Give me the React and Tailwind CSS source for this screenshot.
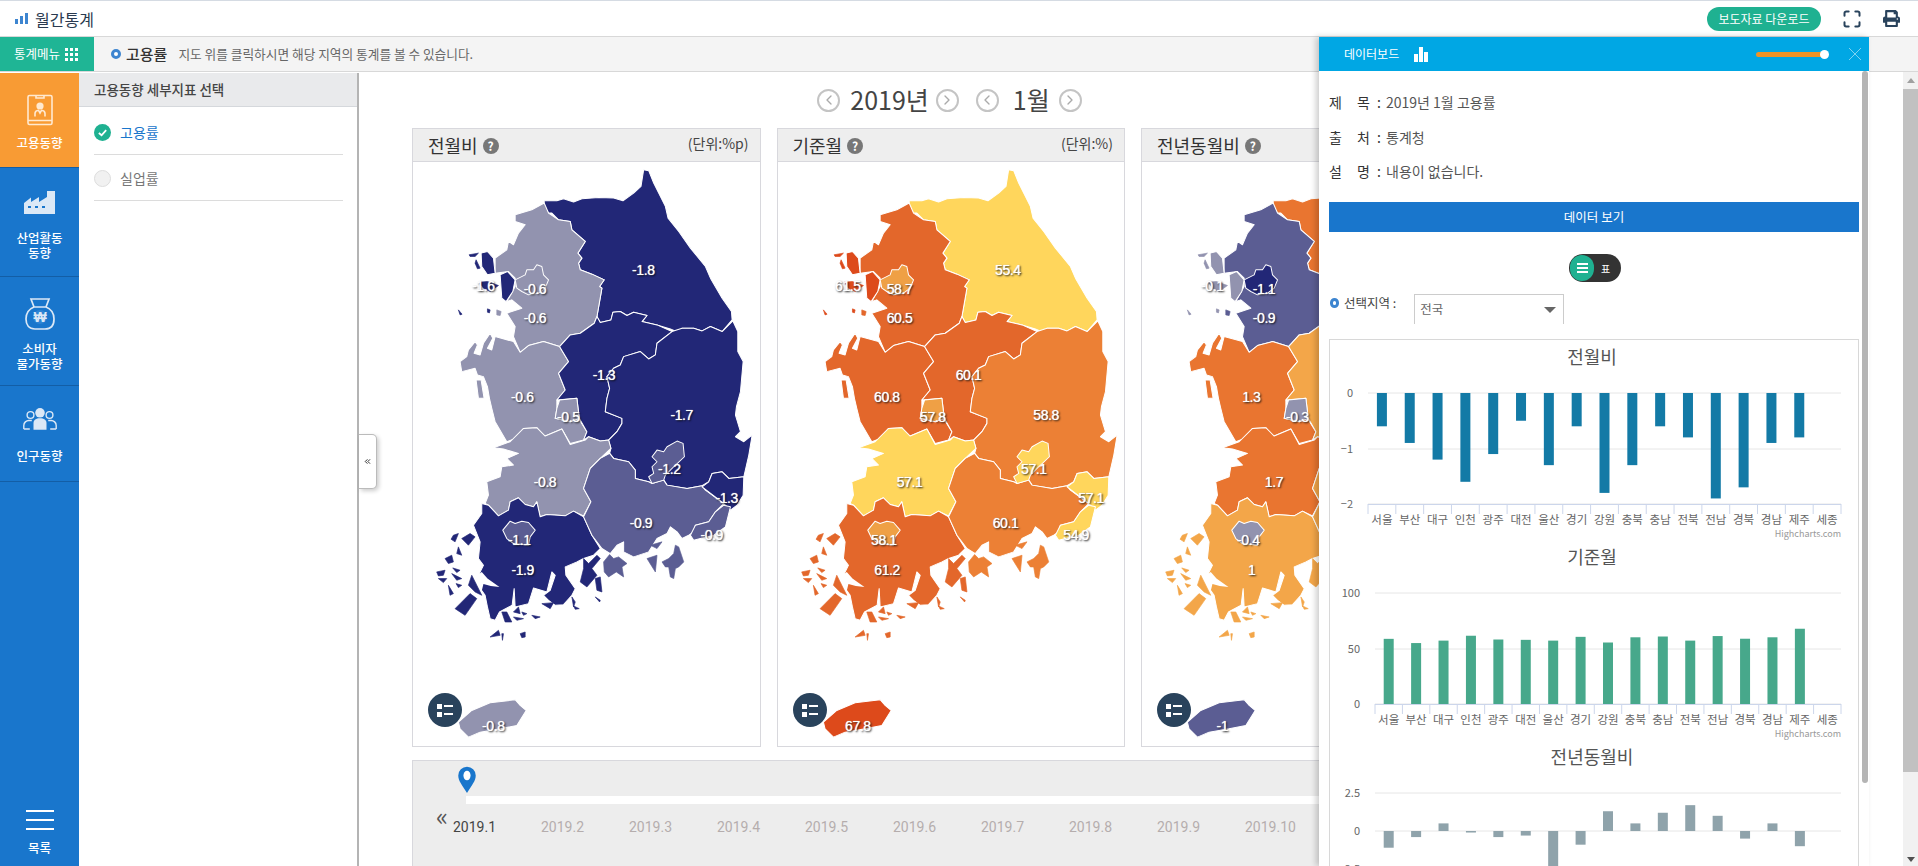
import { ChevronLeft, ChevronRight, ChevronsLeft, Maximize } from "lucide-react";
import { FaPrint } from "react-icons/fa";

const low = (s) =>
  s
    .trim()
    .split(/\s+/)
    .map((q) => {
      const [x, y] = q.split(",");
      return `${x},${+y + 960}`;
    })
    .join(" ");

// map shapes, traced on the first card at 3x
const REGIONS = {
  gangwon: {
    label: [730, 575],
    polys: [
      "432,368 470,368 490,362 520,372 545,362 595,358 640,360 668,368 700,345 722,325 730,275 745,278 760,315 795,385 803,420 835,460 870,510 915,565 930,600 965,660 993,700 995,725 965,760 930,745 905,758 880,750 845,750 840,765 810,752 770,740 725,730 740,712 700,702 680,712 660,700 638,702 632,725 600,733 590,715 605,630 598,625 612,605 575,588 540,575 535,555 545,540 533,525 555,490 515,455 510,430 475,425 455,405 445,405 432,385",
    ],
  },
  gyeonggi: {
    label: [405, 720],
    polys: [
      "432,375 445,405 475,425 510,430 515,455 555,490 533,525 545,540 535,555 540,575 575,588 612,605 598,625 605,630 590,715 582,735 540,765 510,770 478,805 430,790 385,802 360,822 340,775 345,745 320,705 365,690 335,665 320,670 345,625 345,600 325,580 285,585 285,540 320,515 325,490 340,500 355,465 375,440 345,430 345,410 395,395",
    ],
    islands: ["290,695 303,700 300,712 290,710"],
  },
  incheon: {
    label: [250, 622],
    polys: [
      "300,590 322,580 345,605 338,640 318,670 305,660",
      "243,525 262,520 280,540 285,585 262,590 245,565",
    ],
    islands: [
      "207,530 235,525 225,535 210,535",
      "228,545 240,570 232,572 225,555",
      "238,612 262,610 295,622 270,640 250,630",
      "175,695 186,708 180,710",
      "262,692 270,695 268,704 262,702",
    ],
  },
  chungnam: {
    label: [367, 955],
    polys: [
      `180,850 200,835 205,815 225,790 232,800 222,825 240,830 250,795 270,765 278,780 262,810 275,815 285,775 340,790 360,822 385,802 430,790 478,805 505,850 475,885 495,935 470,965 ${low(
        "470,30 465,60 510,70 535,60 560,100 550,125 510,135 485,92 430,115 410,88 370,90 360,115 320,130 285,70 275,30",
      )} 268,960 262,925 250,895 232,890 225,870 185,880`,
      "228,905 243,905 252,960 235,960",
    ],
  },
  chungbuk: {
    label: [612, 890],
    polys: [
      `478,805 510,770 540,765 582,735 590,715 600,733 632,725 638,702 660,700 680,712 700,702 740,712 725,730 770,740 815,760 770,795 765,830 745,842 720,820 670,835 660,860 640,870 620,895 628,930 620,960 ${low(
        "615,40 665,60 665,75 650,100 625,125 600,128 565,115 550,125 560,100 537,60 530,0",
      )} 470,965 495,935 475,885 505,850`,
    ],
  },
  gyeongbuk: {
    label: [845, 1010],
    polys: [
      `815,760 845,750 880,750 905,758 930,745 965,760 997,728 1012,760 1012,820 1028,850 1020,940 1008,985 ${low(
        "1005,50 1020,100 1005,115 1030,130 1055,110 1045,170 1030,235 985,240 965,220 935,225 925,250 905,262 860,270 800,260 790,245 755,255 745,250 705,240 705,215 685,190 640,180 628,165 632,150 625,125 650,100 665,75 665,60 615,40",
      )} 620,960 628,930 620,895 640,870 660,860 670,835 720,820 745,842 765,830 770,795`,
    ],
  },
  jeonbuk: {
    label: [435, 1212],
    polys: [
      low(
        "280,148 330,130 370,90 410,88 435,113 485,92 510,138 555,125 565,115 600,128 625,125 632,150 600,180 570,210 550,270 572,310 550,352 520,338 495,352 440,348 420,355 410,310 400,325 375,318 355,298 330,310 325,335 295,352 265,320 255,315 265,290 260,250 300,235 305,205 340,200 320,180 355,165 310,152",
      ),
    ],
  },
  jeonnam: {
    label: [368, 1475],
    polys: [
      low(
        "245,315 265,320 295,352 325,335 330,310 355,298 375,318 400,325 410,310 420,355 440,348 495,352 520,338 550,355 575,410 600,450 580,470 550,480 530,490 495,505 497,530 525,570 515,590 490,618 465,620 445,605 430,590 450,575 465,530 455,520 440,580 400,568 385,615 345,625 342,570 336,620 298,640 285,665 270,660 262,625 255,590 230,555 240,520 250,500 235,480 240,430 220,380 245,345",
      ),
    ],
    cuts: [low("232,530 245,520 262,540 298,565 272,562 250,556 243,585 230,560")],
    islands: [
      "160,410 175,405 165,430 153,422",
      "185,420 210,405 225,415 205,440",
      "175,445 185,470 170,465",
      "135,480 155,470 160,490 145,495",
      "158,508 180,515 170,522",
      "110,520 135,515 130,530 115,532",
      "115,540 140,540 130,552",
      "155,525 185,540 170,545",
      "168,555 185,560 175,567",
      "145,560 160,585 150,590",
      "205,560 215,530 245,590 225,580",
      "165,630 210,585 230,600 195,650",
      "305,640 320,640 335,670 315,670",
      "340,640 355,625 360,645",
      "340,655 370,660 350,665",
      "365,640 380,645 370,650",
      "395,650 420,655 405,660",
      "425,615 460,612 450,630",
      "515,595 525,610 520,625",
      "520,622 537,630 525,632",
      "585,595 600,605 598,610",
      "585,540 600,535 605,580 590,575",
      "550,480 565,495 590,470 600,480 575,510 590,530 560,565 540,550 550,510",
      "270,715 295,695 300,710",
      "305,705 310,705 307,725",
      "360,705 375,700 375,715 365,717",
    ].map(low),
  },
  gyeongnam: {
    label: [723, 1334],
    polys: [
      low(
        "628,165 640,180 685,190 705,215 705,240 745,250 755,255 790,245 800,260 860,270 905,262 915,275 970,315 945,340 925,370 885,380 880,400 865,410 845,420 830,400 810,385 800,405 770,420 745,460 700,475 670,460 670,430 650,440 630,465 605,450 575,410 550,355 572,310 550,270 570,210 600,180",
      ),
    ],
    islands: [
      "610,490 628,468 640,480 655,475 680,495 665,505 670,535 648,520 625,535 612,520",
      "750,440 785,430 770,450",
      "740,480 770,470 765,520",
      "785,490 805,480 820,465 825,440 835,445 840,460 850,490 835,505 825,510 820,540 810,535 805,505 795,505",
    ].map(low),
  },
  ulsan: {
    label: [980, 1258],
    polys: [
      low(
        "905,265 925,250 935,225 965,220 985,240 1030,235 1028,290 1010,320 990,335 970,315",
      ),
    ],
  },
  busan: {
    label: [935, 1370],
    polys: [
      low(
        "870,410 885,380 925,370 945,340 970,320 990,325 975,385 940,410 900,420 880,425",
      ),
    ],
  },
  seoul: {
    label: [405, 632],
    polys: [
      "345,605 375,590 380,575 400,575 410,560 425,565 430,590 445,605 435,630 415,645 385,650 365,640 350,630",
    ],
  },
  daejeon: {
    label: [505, 1015],
    polys: [low("470,30 478,5 530,0 537,60 510,70 465,60")],
  },
  daegu: {
    label: [808, 1172],
    polys: [
      low(
        "800,145 830,128 848,135 852,175 820,205 795,230 790,245 755,255 745,235 760,225 755,205 770,190 755,175 770,155 790,160",
      ),
    ],
  },
  gwangju: {
    label: [358, 1385],
    polys: [
      low(
        "308,395 330,368 345,375 365,368 385,372 405,395 390,415 385,440 340,435 320,420",
      ),
    ],
  },
  jeju: {
    label: [280, 1943],
    polys: [
      low(
        "175,970 215,935 270,912 345,903 360,920 378,935 350,980 300,990 240,1000 205,1015 180,990",
      ),
    ],
  },
};

const D = "#222777";
const M = "#5b5d93";
const L = "#9293af";
const R1 = "#e3672b";
const R2 = "#ec8035";
const Y = "#ffd65c";
const A = "#efa045";
const X = "#dd4a1b";
const O1 = "#e97530";
const O2 = "#f3a649";

const CARDS = [
  {
    title: "전월비",
    unit: "(단위:%p)",
    data: {
      gangwon: ["-1.8", D],
      gyeonggi: ["-0.6", L],
      seoul: ["-0.6", L],
      incheon: ["-1.6", D],
      chungnam: ["-0.6", L],
      daejeon: ["-0.5", L],
      chungbuk: ["-1.3", D],
      gyeongbuk: ["-1.7", D],
      daegu: ["-1.2", M],
      jeonbuk: ["-0.8", L],
      ulsan: ["-1.3", D],
      gyeongnam: ["-0.9", M],
      busan: ["-0.9", M],
      gwangju: ["-1.1", M],
      jeonnam: ["-1.9", D],
      jeju: ["-0.8", L],
    },
  },
  {
    title: "기준월",
    unit: "(단위:%)",
    data: {
      gangwon: ["55.4", Y],
      gyeonggi: ["60.5", R1],
      seoul: ["58.7", A],
      incheon: ["61.5", X],
      chungnam: ["60.8", R1],
      daejeon: ["57.8", A],
      chungbuk: ["60.1", R1],
      gyeongbuk: ["58.8", R2],
      daegu: ["57.1", Y],
      jeonbuk: ["57.1", Y],
      ulsan: ["57.1", Y],
      gyeongnam: ["60.1", R2],
      busan: ["54.9", Y],
      gwangju: ["58.1", A],
      jeonnam: ["61.2", R1],
      jeju: ["67.8", X],
    },
  },
  {
    title: "전년동월비",
    unit: "",
    data: {
      gangwon: ["", O1],
      gyeonggi: ["-0.9", M],
      seoul: ["-1.1", D],
      incheon: ["-0.1", L],
      chungnam: ["1.3", O1],
      daejeon: ["-0.3", L],
      chungbuk: ["", O2],
      gyeongbuk: ["", O2],
      daegu: ["", O2],
      jeonbuk: ["1.7", O1],
      ulsan: ["", O2],
      gyeongnam: ["", O2],
      busan: ["", O2],
      gwangju: ["-0.4", L],
      jeonnam: ["1", O2],
      jeju: ["-1", M],
    },
  },
];

const CITIES = ["서울", "부산", "대구", "인천", "광주", "대전", "울산", "경기", "강원", "충북", "충남", "전북", "전남", "경북", "경남", "제주", "세종"];

function KoreaMap({ data }) {
  return (
    <svg viewBox="39 252 1038 1749" className="block w-full h-full">
      {Object.entries(REGIONS).map(([key, r]) => (
        <g key={key} fill={data[key][1]}>
          {r.polys.map((p, i) => (
            <polygon key={i} points={p} stroke="#ffffff" strokeWidth="3" strokeLinejoin="round" />
          ))}
          {(r.cuts || []).map((p, i) => (
            <polygon key={i} points={p} fill="#ffffff" />
          ))}
          {(r.islands || []).map((p, i) => (
            <polygon key={i} points={p} stroke={data[key][1]} strokeWidth="2" strokeLinejoin="round" />
          ))}
        </g>
      ))}
    </svg>
  );
}

function MapCard({ card }) {
  return (
    <div className="flex flex-col w-[348.5px] h-[619px] shrink-0 border border-[#d8d8dd]">
      <div className="flex items-center justify-between h-[35px] pl-[15px] pr-[11px] bg-[#eeeeee] border-b border-[#d8d8dd]">
        <div className="flex items-center gap-[5px]">
          <span className="text-[18px] text-[#333]">{card.title}</span>
          <span className="flex items-center justify-center w-4 h-4 mt-[2px] rounded-full bg-[#777] text-white text-[12px] font-bold leading-none">?</span>
        </div>
        <span className="text-[14px] text-[#444] -mt-[3px]">{card.unit}</span>
      </div>
      <div className="relative flex-1">
        <KoreaMap data={card.data} />
        {Object.entries(REGIONS).map(([key, r]) => (
          <span
            key={key}
            className="absolute -translate-x-1/2 -translate-y-1/2 font-['Liberation_Sans',sans-serif] text-[14px] tracking-[-0.4px] text-white [text-shadow:0_0_1px_#fff,1px_1px_2px_#000]"
            style={{ left: (r.label[0] - 39) / 3, top: (r.label[1] - 252) / 3 }}
          >
            {card.data[key][0]}
          </span>
        ))}
        <div className="absolute left-[15px] bottom-[19px] flex flex-col items-center justify-center gap-[3px] w-[34px] h-[34px] rounded-full bg-[#29435c]">
          <span className="flex items-center gap-[2px]">
            <span className="w-[5px] h-[5px] bg-white" />
            <span className="w-[9px] h-[2px] bg-white" />
          </span>
          <span className="flex items-center gap-[2px]">
            <span className="w-[5px] h-[5px] bg-white" />
            <span className="w-[9px] h-[2px] bg-white" />
          </span>
        </div>
      </div>
    </div>
  );
}

function Chart({ title, values, color, ticks, left, labelX, zero, unit, cropped }) {
  const right = 511;
  const cell = (right - left) / 17;
  return (
    <svg viewBox="0 0 528 200" className="block w-[528px] h-[200px] shrink-0">
      <text x="262" y="23" textAnchor="middle" fontSize="18" fill="#555">
        {title}
      </text>
      {ticks.map(([t, y]) => (
        <g key={t}>
          <line x1={left} x2={right} y1={y} y2={y} stroke="#e6e6e6" />
          <text x={labelX} y={y + 4} textAnchor="end" fontSize="11" fill="#666">
            {t}
          </text>
        </g>
      ))}
      {values.map((v, i) => {
        const h = Math.abs(v) * unit;
        return (
          <rect
            key={i}
            x={left + cell * i + cell / 2 - 5}
            y={v < 0 ? zero : zero - h}
            width="10"
            height={h}
            fill={color}
          />
        );
      })}
      {!cropped && (
        <g>
          <line x1={left} x2={right} y1="163.5" y2="163.5" stroke="#ccd6eb" />
          {CITIES.map((c, i) => (
            <g key={c}>
              <line x1={left + cell * i} x2={left + cell * i} y1="163" y2="173" stroke="#ccd6eb" />
              <text x={left + cell * i + cell / 2} y="183" textAnchor="middle" fontSize="11.5" fill="#666">
                {c}
              </text>
            </g>
          ))}
          <line x1={right} x2={right} y1="163" y2="173" stroke="#ccd6eb" />
          <text x={right} y="196" textAnchor="end" fontSize="9" fill="#999">
            Highcharts.com
          </text>
        </g>
      )}
    </svg>
  );
}

const NAV = [
  { label: "고용동향", h: "h-[95px]", pt: "pt-[21px]" },
  { label: "산업활동\n동향", h: "h-[109px]", pt: "pt-[21px]" },
  { label: "소비자\n물가동향", h: "h-[109px]", pt: "pt-[21px]" },
  { label: "인구동향", h: "h-[96px]", pt: "pt-[22px]" },
];

function NavIcon({ i }) {
  if (i === 0) {
    return (
      <svg viewBox="0 0 26 32" className="w-[26px] h-[32px] mb-[9px]" fill="none" stroke="#ffe9d0" strokeWidth="1.6">
        <rect x="1" y="1.5" width="24" height="29" rx="1.5" />
        <path d="M9 1.5v2.5h8V1.5M1 26.5h24" />
        <circle cx="13" cy="12" r="3.6" fill="#ffe9d0" stroke="none" />
        <path d="M8 22.500v-3c0-1.800 2-3 3.500-3.200L13 19l1.500-2.700c1.500.2 3.500 1.400 3.500 3.200v3" />
      </svg>
    );
  }
  if (i === 1) {
    return (
      <svg viewBox="0 0 32 26" className="w-[32px] h-[26px] mb-[15px]">
        <path fill="#dbe8f6" d="M0 25V14l7-5.500V13l8-5v5l8-5V2h8v23z" />
        <g fill="#1976cc">
          <rect x="4" y="17" width="3" height="2" />
          <rect x="11" y="17" width="3" height="2" />
          <rect x="18" y="17" width="3" height="2" />
        </g>
      </svg>
    );
  }
  if (i === 2) {
    return (
      <svg viewBox="0 0 30 32" className="w-[30px] h-[32px] mb-[11px]" fill="none" stroke="#dbe8f6" strokeWidth="1.7">
        <path d="M6 1h18l-3 8h-12zM9 9C4 11 1 15 1 21c0 6 3 10 9 10h10c6 0 9-4 9-10 0-6-3-10-8-12" />
        <circle cx="15" cy="19" r="7" fill="#2f85d4" stroke="none" />
        <text x="15" y="24" textAnchor="middle" fontSize="14" fontWeight="700" fontFamily="Liberation Sans, DejaVu Sans, sans-serif" fill="#dbe8f6" stroke="none">
          ₩
        </text>
      </svg>
    );
  }
  return (
    <svg viewBox="0 0 34 22" className="w-[34px] h-[22px] mb-[18px]">
      <g fill="none" stroke="#dbe8f6" strokeWidth="1.4">
        <circle cx="7.500" cy="7" r="3.400" />
        <circle cx="26.500" cy="7" r="3.400" />
        <path d="M.8 21v-3.500c0-3 2.500-5 5-5h3M33.200 21v-3.500c0-3-2.500-5-5-5h-3" />
        <path d="M.8 21h6M33.200 21h-6" />
      </g>
      <circle cx="17" cy="4.800" r="4.800" fill="#dbe8f6" />
      <path fill="#dbe8f6" d="M10.500 21.800V15c0-3 2.500-4.800 6.500-4.800s6.500 1.800 6.500 4.800v6.800z" />
    </svg>
  );
}

function RoundArrow({ dir }) {
  const Icon = dir === "l" ? ChevronLeft : ChevronRight;
  return (
    <span className="flex items-center justify-center w-[23px] h-[23px] rounded-full border-2 border-[#c4c4c4]">
      <Icon size={16} color="#aaaaaa" strokeWidth={2} />
    </span>
  );
}

function InfoRow({ a, b, children }) {
  return (
    <div className="flex">
      <span className="w-[28px] text-[#333]">{a}</span>
      <span className="w-[20px] text-[#333]">{b}</span>
      <span className="w-[9px] text-[#333]">:</span>
      <span>{children}</span>
    </div>
  );
}

export default function App() {
  return (
    <div className="relative flex flex-col w-full h-[866px] overflow-hidden bg-white font-['Noto_Sans_CJK_KR',sans-serif]">
      {/* header */}
      <div className="flex items-center justify-between h-[37px] pl-[15px] pr-[18px] border-t border-b border-t-[#d5dbe3] border-b-[#d8d8d8] shrink-0">
        <div className="flex items-center gap-[7px]">
          <span className="flex items-end gap-[2px] h-[11px]">
            <span className="w-[3px] h-[5px] bg-[#3d85d0]" />
            <span className="w-[3px] h-[8px] bg-[#3d85d0]" />
            <span className="w-[3px] h-[11px] bg-[#3d85d0]" />
          </span>
          <span className="text-[16px] text-[#2a3a50]">월간통계</span>
        </div>
        <div className="flex items-center">
          <span className="flex items-center justify-center w-[114px] h-[24px] rounded-full bg-[#1fb191] text-white text-[12px]">보도자료 다운로드</span>
          <Maximize size={20} color="#29435c" strokeWidth={2.4} className="ml-[21px]" />
          <FaPrint size={17} color="#29435c" className="ml-[21px]" />
        </div>
      </div>

      {/* notice bar */}
      <div className="flex items-center h-[35px] bg-[#f4f4f4] border-b border-[#d8d8d8] shrink-0">
        <div className="flex items-center w-[94px] h-[34px] pl-[14px] gap-[5px] bg-[#1fb595] text-white text-[12.5px]">
          통계메뉴
          <span className="grid grid-cols-3 gap-[2px]">
            {[0, 1, 2, 3, 4, 5, 6, 7, 8].map((n) => (
              <span key={n} className="w-[3px] h-[3px] bg-white" />
            ))}
          </span>
        </div>
        <span className="ml-[17px] w-[10px] h-[10px] rounded-full border-[3px] border-[#3d85d0] bg-white" />
        <span className="ml-[5px] text-[15px] font-medium text-[#333]">고용률</span>
        <span className="ml-[11px] text-[12.700px] text-[#666]">지도 위를 클릭하시면 해당 지역의 통계를 볼 수 있습니다.</span>
      </div>

      {/* body */}
      <div className="flex flex-1 min-h-0">
        <div className="flex flex-col w-[79px] mt-[1px] shrink-0 bg-[#1976cc] text-white text-[12.5px] font-medium leading-[15px] text-center">
          {NAV.map((n, i) => (
            <div key={n.label} className={`flex flex-col items-center ${n.h} ${n.pt} border-b border-[#135ea6] ${i === 0 ? "bg-[#f89b34]" : ""}`}>
              <NavIcon i={i} />
              <span className="whitespace-pre-line">{n.label}</span>
            </div>
          ))}
          <div className="flex flex-col items-center mt-auto pb-[11px]">
            <span className="flex flex-col gap-[7px] mb-[10px]">
              <span className="w-[28px] h-[2px] bg-white" />
              <span className="w-[28px] h-[2px] bg-white" />
              <span className="w-[28px] h-[2px] bg-white" />
            </span>
            목록
          </div>
        </div>

        <div className="relative w-[280px] mt-[1px] shrink-0 border-r-2 border-[#b4b4b4]">
          <div className="flex items-center h-[34px] pl-[15px] bg-[#e9eaec] border-b border-[#d5d8dc] text-[13.5px] font-medium text-[#444]">
            고용동향 세부지표 선택
          </div>
          <div className="mx-[15px] mr-[14px]">
            <div className="flex items-center h-[48px] pt-[4px] gap-[9px] border-b border-[#dcdcdc] text-[14px] text-[#1976cc]">
              <span className="flex items-center justify-center w-[17px] h-[17px] rounded-full bg-[#1fb191]">
                <svg viewBox="0 0 12 12" className="w-[11px] h-[11px]" fill="none" stroke="#fff" strokeWidth="2">
                  <path d="M2 6.500l3 2.500 5-5.500" />
                </svg>
              </span>
              고용률
            </div>
            <div className="flex items-center h-[46px] pt-[2px] gap-[9px] border-b border-[#dcdcdc] text-[14px] text-[#777]">
              <span className="w-[17px] h-[17px] rounded-full bg-[#f1f1f1] border border-[#dddddd]" />
              실업률
            </div>
          </div>
          <div className="absolute -right-[20px] top-[361px] flex items-center justify-center w-[18px] h-[55px] bg-white border border-l-0 border-[#bbbbbb] rounded-r-[5px] shadow-[2px_2px_4px_rgba(0,0,0,0.2)]">
            <ChevronsLeft size={9} color="#222" strokeWidth={2.5} />
          </div>
        </div>

        <div className="flex-1 min-w-0 overflow-hidden pl-[53px]">
          <div className="flex items-center justify-center w-[1075px] h-[56px] text-[25px] text-[#444]">
            <RoundArrow dir="l" />
            <span className="ml-[10px] mr-[7px]">2019년</span>
            <RoundArrow dir="r" />
            <span className="w-[17px]" />
            <RoundArrow dir="l" />
            <span className="ml-[14px] mr-[9px]">1월</span>
            <RoundArrow dir="r" />
          </div>
          <div className="flex gap-4">
            {CARDS.map((c) => (
              <MapCard key={c.title} card={c} />
            ))}
          </div>
          <div className="relative w-[1077px] h-[140px] mt-[13px] bg-[#ededed] border border-[#d8d8dd]">
            <svg viewBox="0 0 24 34" className="absolute left-[42px] top-[5px] w-[24px] h-[27px]">
              <path fill="#1976cc" d="M12 34C6 24 1 19 1 12a11 11 0 0 1 22 0c0 7-5 12-11 22z" />
              <ellipse cx="12" cy="12" rx="4.500" ry="6" fill="#fff" />
            </svg>
            <div className="h-[8px] ml-[53px] mt-[35px] bg-white" />
            <div className="flex items-start">
              <span className="w-[17px] ml-[23px] text-[25px] leading-[22px] text-[#555]">«</span>
              <div className="flex mt-[13px] text-[14px] text-[#b5adad] font-['Roboto',sans-serif]">
                {[1, 2, 3, 4, 5, 6, 7, 8, 9, 10].map((m) => (
                  <span key={m} className={`w-[88px] ${m === 1 ? "text-[#444]" : ""}`}>
                    2019.{m}
                  </span>
                ))}
              </div>
            </div>
          </div>
        </div>

        {/* page scrollbar */}
        <div className="flex flex-col items-center w-[15px] shrink-0 bg-[#f1f1f1]">
          <span className="h-[17px] pt-[6px] leading-none">
            <span className="block w-0 h-0 border-x-[4px] border-x-transparent border-b-[5px] border-b-[#a0a0a0]" />
          </span>
          <span className="w-full h-[683px] bg-[#c1c1c1]" />
          <span className="mt-auto mb-[4px] w-0 h-0 border-x-[4px] border-x-transparent border-t-[5px] border-t-[#505050]" />
        </div>
      </div>

      {/* data board */}
      <div className="absolute left-[1319px] top-[37px] bottom-0 flex flex-col w-[550px] bg-white shadow-[-3px_0_6px_rgba(0,0,0,0.2)]">
        <div className="flex items-center h-[34px] pl-[25px] pr-[7px] bg-[#00a7e4] text-white text-[12px] shrink-0">
          데이터보드
          <span className="flex items-end gap-[1px] ml-[15px] h-[15px]">
            <span className="w-[4px] h-[8px] bg-white" />
            <span className="w-[4px] h-[15px] bg-white" />
            <span className="w-[4px] h-[10px] bg-white" />
          </span>
          <span className="relative ml-auto w-[72px] h-[5px] rounded-full bg-[#ef9325]">
            <span className="absolute -right-[1px] -top-[2px] w-[9px] h-[9px] rounded-full bg-white" />
          </span>
          <svg viewBox="0 0 14 14" className="ml-[20px] w-[14px] h-[14px]" stroke="#7fd3f1" strokeWidth="1">
            <path d="M1 1l12 12M13 1L1 13" />
          </svg>
        </div>
        <div className="relative flex-1 min-h-0 overflow-hidden pl-[10px] pr-[10px]">
          <div className="absolute right-[1px] top-0 w-[6px] h-[712px] rounded-full bg-[#b4b4b4]" />
          <div className="flex flex-col gap-[14.500px] pt-[21px] text-[14px] leading-[20px] text-[#555]">
            <InfoRow a="제" b="목">2019년 1월 고용률</InfoRow>
            <InfoRow a="출" b="처">통계청</InfoRow>
            <InfoRow a="설" b="명">내용이 없습니다.</InfoRow>
          </div>
          <div className="flex items-center justify-center w-[530px] h-[30px] mt-[21px] bg-[#1976cc] text-white text-[12.5px]">
            데이터 보기
          </div>
          <div className="flex justify-center mt-[22px] ml-[2px]">
            <div className="flex items-center w-[52px] h-[28px] rounded-full bg-[#333333]">
              <span className="flex flex-col items-center justify-center gap-[2px] w-[24px] h-[26px] ml-[1px] rounded-full bg-[#1fb191]">
                <span className="w-[11px] h-[2px] bg-white" />
                <span className="w-[11px] h-[2px] bg-white" />
                <span className="w-[11px] h-[2px] bg-white" />
              </span>
              <span className="ml-[7px] text-[10px] text-white">표</span>
            </div>
          </div>
          <div className="flex items-start mt-[12px] h-[30px]">
            <span className="mt-[4px] ml-[1px] w-[9px] h-[10px] rounded-full border-[3px] border-[#3d85d0] bg-white" />
            <span className="ml-[5px] text-[12.5px] text-[#444]">선택지역 :</span>
            <div className="flex items-center justify-between ml-[18px] w-[150px] h-[30px] pl-[5px] pr-[7px] border border-b-0 border-[#cccccc] text-[12.5px] text-[#666]">
              전국
              <span className="w-0 h-0 border-x-[6px] border-x-transparent border-t-[6px] border-t-[#666]" />
            </div>
          </div>
          <div className="flex flex-col w-[530px] h-[600px] mt-[15px] pt-[1px] border border-[#d8d8d8] overflow-hidden">
            <Chart
              title="전월비"
              color="#137aa6"
              left={38}
              labelX={23}
              zero={52}
              unit={55.5}
              ticks={[["0", 52], ["−1", 108], ["−2", 163]]}
              values={[-0.6, -0.9, -1.2, -1.6, -1.1, -0.5, -1.3, -0.6, -1.8, -1.3, -0.6, -0.8, -1.9, -1.7, -0.9, -0.8, 0]}
            />
            <Chart
              title="기준월"
              color="#47a88b"
              left={45}
              labelX={30}
              zero={163}
              unit={1.11}
              ticks={[["100", 52], ["50", 108], ["0", 163]]}
              values={[58.7, 54.9, 57.1, 61.5, 58.1, 57.8, 57.1, 60.5, 55.4, 60.1, 60.8, 57.1, 61.2, 58.8, 60.1, 67.8, 0]}
            />
            <Chart
              title="전년동월비"
              color="#8fa3ab"
              left={45}
              labelX={30}
              zero={90}
              unit={15.2}
              cropped
              ticks={[["2.5", 52], ["0", 90], ["−2.5", 128]]}
              values={[-1.1, -0.4, 0.5, -0.1, -0.4, -0.3, -3, -0.9, 1.3, 0.5, 1.2, 1.7, 1, -0.5, 0.5, -1, 0]}
            />
          </div>
        </div>
      </div>
    </div>
  );
}
